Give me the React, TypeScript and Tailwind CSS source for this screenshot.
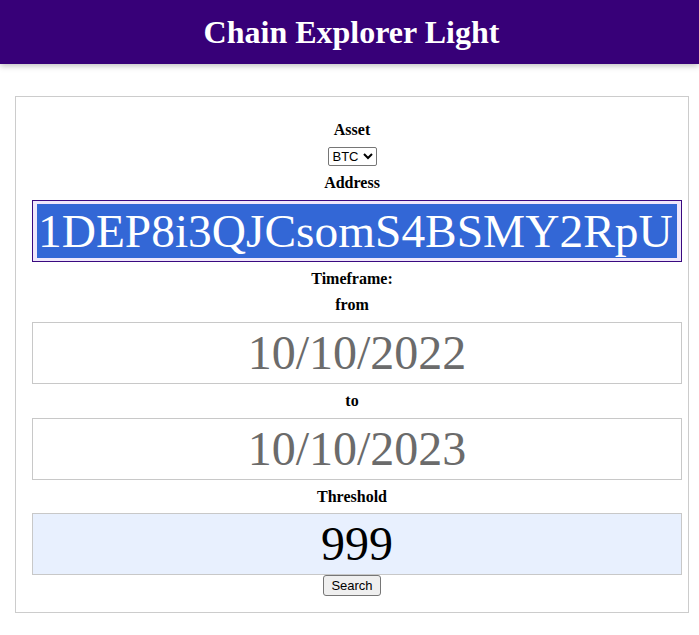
import React from 'react';

const serif = { fontFamily: '"Liberation Serif", "Times New Roman", serif' };

const Label = ({ children }: { children: React.ReactNode }) => (
	<label className="block text-center text-[16px] font-bold leading-[18px] text-black">{children}</label>
);

const BigField = ({ value, className = '' }: { value: string; className?: string }) => (
	<div
		className={`flex h-[62px] w-[650px] shrink-0 items-center justify-center overflow-hidden whitespace-nowrap border border-[#c8c8c8] text-[48px] leading-[54px] ${className}`}
	>
		{value}
	</div>
);

const App = () => {
	return (
		<div className="min-h-[635px] bg-white" style={serif}>
			<header className="flex h-16 items-center justify-center bg-[#370078] pl-1 shadow-[0_2px_6px_rgba(0,0,0,0.25)]">
				<h1 className="text-[32px] font-bold text-white">Chain Explorer Light</h1>
			</header>

			<main className="ml-[15px] mt-8 w-[674px] border border-[#cccccc] px-4 pb-4 pt-6">
				<form className="flex flex-col items-start gap-2" onSubmit={(e) => e.preventDefault()}>
					<div className="w-[640px]">
						<Label>Asset</Label>
					</div>
					<div className="flex w-[640px] justify-center">
						<select
							defaultValue="BTC"
							className="h-[19px] w-[49px] appearance-auto rounded-[2px] border border-[#767676] bg-white text-[13px] text-black"
							style={{ fontFamily: '"Liberation Sans", Arial, sans-serif' }}
						>
							<option>BTC</option>
							<option>ETH</option>
							<option>LTC</option>
						</select>
					</div>
					<div className="w-[640px]">
						<Label>Address</Label>
					</div>
					<div className="flex h-[62px] w-[650px] shrink-0 items-center border border-[#3a0a80] bg-[#efe7fb] px-1">
						<div className="h-[54px] w-full overflow-hidden whitespace-nowrap bg-[#3367d6] pl-px text-[47.4px] leading-[54px] text-white">
							1DEP8i3QJCsomS4BSMY2RpU
						</div>
					</div>
					<div className="w-[640px]">
						<Label>Timeframe:</Label>
					</div>
					<div className="w-[640px]">
						<Label>from</Label>
					</div>
					<BigField value="10/10/2022" className="bg-white text-[#6b6b6b]" />
					<div className="w-[640px]">
						<Label>to</Label>
					</div>
					<BigField value="10/10/2023" className="bg-white text-[#6b6b6b]" />
					<div className="w-[640px]">
						<Label>Threshold</Label>
					</div>
					<div className="-mt-px flex w-[640px] flex-col items-center">
						<div className="self-start">
							<BigField value="999" className="bg-[#e8f0fe] text-black" />
						</div>
						<button
							type="submit"
							className="h-[21px] rounded-[3px] border border-[#767676] bg-[#efefef] px-[7px] text-[13px] leading-none text-black"
							style={{ fontFamily: '"Liberation Sans", Arial, sans-serif' }}
						>
							Search
						</button>
					</div>
				</form>
			</main>
		</div>
	);
};

export default App;
